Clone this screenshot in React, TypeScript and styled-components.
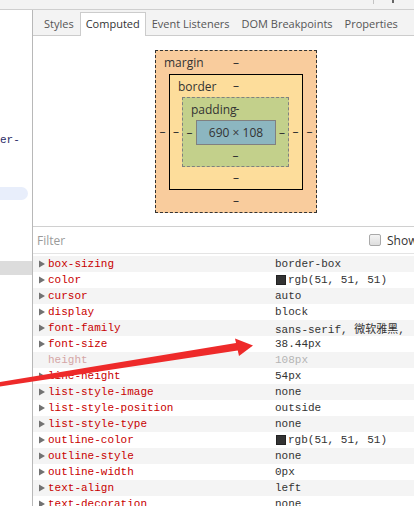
import styled, { createGlobalStyle } from 'styled-components';

const GlobalStyle = createGlobalStyle`
  html, body {
    margin: 0;
    padding: 0;
    background: #fff;
    overflow: hidden;
  }
`;

interface CssProp {
  name: string;
  value: string;
  swatch?: boolean;
  inactive?: boolean;
}

const props: CssProp[] = [
  { name: 'box-sizing', value: 'border-box' },
  { name: 'color', value: 'rgb(51, 51, 51)', swatch: true },
  { name: 'cursor', value: 'auto' },
  { name: 'display', value: 'block' },
  { name: 'font-family', value: 'sans-serif, 微软雅黑,' },
  { name: 'font-size', value: '38.44px' },
  { name: 'height', value: '108px', inactive: true },
  { name: 'line-height', value: '54px' },
  { name: 'list-style-image', value: 'none' },
  { name: 'list-style-position', value: 'outside' },
  { name: 'list-style-type', value: 'none' },
  { name: 'outline-color', value: 'rgb(51, 51, 51)', swatch: true },
  { name: 'outline-style', value: 'none' },
  { name: 'outline-width', value: '0px' },
  { name: 'text-align', value: 'left' },
  { name: 'text-decoration', value: 'none' },
];

const tabs = ['Styles', 'Computed', 'Event Listeners', 'DOM Breakpoints', 'Properties'];

const App = () => {
  return (
    <Frame>
      <GlobalStyle />
      <TopStrip>
        <StripMark />
        <StripDot />
      </TopStrip>
      <Main>
        <LeftPane>
          <CutText>er-</CutText>
          <Pill />
          <SelectedBand />
        </LeftPane>
        <RightPane>
          <TabBar>
            {tabs.map((t) => (
              <Tab key={t} $active={t === 'Computed'}>{t}</Tab>
            ))}
          </TabBar>
          <BoxArea>
            <Layer $bg="#f9cc9d" $border="1px dashed #333">
              <Label>margin</Label>
              <TopCell $h={23}>–</TopCell>
              <MidRow>
                <SideCell $w={13}>–</SideCell>
                <Layer $bg="#fddd9b" $border="1px solid #000">
                  <Label>border</Label>
                  <TopCell $h={22}>–</TopCell>
                  <MidRow>
                    <SideCell $w={12}>–</SideCell>
                    <Layer $bg="#c3d08b" $border="1px dashed #808080">
                      <Label>padding</Label>
                      <TopCell $h={22} $shift={4}>-</TopCell>
                      <MidRow>
                        <SideCell $w={13}>–</SideCell>
                        <Content>690 × 108</Content>
                        <SideCell $w={12}>–</SideCell>
                      </MidRow>
                      <TopCell $h={21}>–</TopCell>
                    </Layer>
                    <SideCell $w={13}>–</SideCell>
                  </MidRow>
                  <TopCell $h={22}>–</TopCell>
                </Layer>
                <SideCell $w={13}>–</SideCell>
              </MidRow>
              <TopCell $h={22}>–</TopCell>
            </Layer>
          </BoxArea>
          <FilterRow>
            <FilterText>Filter</FilterText>
            <ShowBox>
              <Check />
              <span>Show all</span>
            </ShowBox>
          </FilterRow>
          <PropList>
            {props.map((p, i) => (
              <PropRow key={p.name} $odd={i % 2 === 1}>
                <Caret $hidden={p.inactive}>
                  <svg width="6" height="8" viewBox="0 0 6 8">
                    <path d="M0 0.5 L6 4 L0 7.5 Z" fill="#727272" />
                  </svg>
                </Caret>
                <PropName $inactive={p.inactive}>{p.name}</PropName>
                <PropValue $inactive={p.inactive}>
                  {p.swatch && <Swatch />}
                  {p.value}
                </PropValue>
              </PropRow>
            ))}
          </PropList>
        </RightPane>
      </Main>
      <Arrow width="414" height="506" viewBox="0 0 414 506">
        <polygon points="0,382 0,386.5 241,350 239,342.5" fill="#ee2a2a" />
        <polygon points="235,338.5 253,345.5 239,356" fill="#ee2a2a" />
      </Arrow>
    </Frame>
  );
};

const Frame = styled.div`
  position: relative;
  width: 414px;
  height: 506px;
  overflow: hidden;
  font-family: 'Open Sans', 'Noto Sans', sans-serif;
  font-size: 12px;
  color: #333;
`;

const TopStrip = styled.div`
  height: 9px;
  background: #f3f3f3;
  border-bottom: 1px solid #cfcfcf;
  display: flex;
  justify-content: flex-end;
  align-items: flex-start;
  padding-right: 20px;
  gap: 18px;
`;

const StripMark = styled.div`
  width: 1px;
  height: 4px;
  background: #c4c4c4;
`;

const StripDot = styled.div`
  width: 2px;
  height: 3px;
  background: #666;
`;

const Main = styled.div`
  display: flex;
  height: 496px;
  overflow: hidden;
`;

const LeftPane = styled.div`
  width: 33px;
  flex-shrink: 0;
  box-sizing: border-box;
  border-right: 1px solid #b8b8b8;
  display: flex;
  flex-direction: column;
  padding-top: 123px;
`;

const CutText = styled.div`
  font-family: 'Liberation Mono', monospace;
  font-size: 11px;
  line-height: 14px;
  color: #2a2a66;
  white-space: nowrap;
  overflow: hidden;
`;

const Pill = styled.div`
  margin-top: 40px;
  width: 28px;
  height: 13px;
  border-radius: 0 7px 7px 0;
  background: #e8eefb;
`;

const SelectedBand = styled.div`
  margin-top: 61px;
  height: 14px;
  background: #dcdcdc;
`;

const RightPane = styled.div`
  flex: 1;
  display: flex;
  flex-direction: column;
  min-width: 0;
  overflow: hidden;

  & > * {
    flex-shrink: 0;
  }
`;

const TabBar = styled.div`
  height: 25px;
  background: #f3f3f3;
  border-bottom: 1px solid #cccccc;
  display: flex;
  align-items: flex-end;
  padding-left: 5px;
  white-space: nowrap;
`;

const Tab = styled.div<{ $active?: boolean }>`
  height: 24px;
  line-height: 21px;
  padding: 0 5px;
  box-sizing: border-box;
  font-size: 11px;
  color: ${(p) => (p.$active ? '#333' : '#555')};
  background: ${(p) => (p.$active ? '#fff' : 'transparent')};
  border: 1px solid ${(p) => (p.$active ? '#cccccc' : 'transparent')};
  border-bottom: none;
  margin-bottom: -1px;
`;

const BoxArea = styled.div`
  height: 191px;
  box-sizing: border-box;
  padding: 14px 0 0 122px;
  border-bottom: 1px solid #d0d0d0;
`;

const Layer = styled.div<{ $bg: string; $border: string }>`
  position: relative;
  display: inline-flex;
  flex-direction: column;
  background: ${(p) => p.$bg};
  border: ${(p) => p.$border};
`;

const Label = styled.span`
  position: absolute;
  left: 8px;
  top: 4px;
  line-height: 16px;
  color: #333;
`;

const TopCell = styled.div<{ $h: number; $shift?: number }>`
  height: ${(p) => p.$h}px;
  display: flex;
  align-items: center;
  justify-content: center;
  padding-left: ${(p) => p.$shift ?? 0}px;
  line-height: 12px;
`;

const MidRow = styled.div`
  display: flex;
  align-items: center;
`;

const SideCell = styled.div<{ $w: number }>`
  width: ${(p) => p.$w}px;
  text-align: center;
  line-height: 12px;
`;

const Content = styled.div`
  width: 80px;
  height: 25px;
  box-sizing: border-box;
  background: #8cb6c0;
  border: 1px solid #808080;
  display: flex;
  align-items: center;
  justify-content: center;
  color: #333;
`;

const FilterRow = styled.div`
  height: 26px;
  border-bottom: 1px solid #e4e4e4;
  display: flex;
  align-items: center;
  padding-left: 4px;
  white-space: nowrap;
`;

const FilterText = styled.span`
  width: 332px;
  flex-shrink: 0;
  color: #9a9a9a;
`;

const ShowBox = styled.div`
  display: flex;
  align-items: center;
  gap: 6px;
  flex-shrink: 0;
  color: #333;
`;

const Check = styled.div`
  width: 10px;
  height: 10px;
  border: 1px solid #a9a9a9;
  background: linear-gradient(#f4f4f4, #dedede);
  border-radius: 2px;
`;

const PropList = styled.div`
  display: flex;
  flex-direction: column;
  padding-top: 2px;
`;

const PropRow = styled.div<{ $odd: boolean }>`
  height: 16px;
  flex-shrink: 0;
  display: flex;
  align-items: center;
  padding-left: 6px;
  background: ${(p) => (p.$odd ? '#fff' : '#f4f4f4')};
  font-family: 'Liberation Mono', 'Noto Sans CJK SC', monospace;
  font-size: 11px;
  white-space: nowrap;
`;

const Caret = styled.span<{ $hidden?: boolean }>`
  width: 9px;
  display: flex;
  align-items: center;
  visibility: ${(p) => (p.$hidden ? 'hidden' : 'visible')};
`;

const PropName = styled.span<{ $inactive?: boolean }>`
  width: 227px;
  color: ${(p) => (p.$inactive ? '#d4a6a6' : '#c80000')};
`;

const PropValue = styled.span<{ $inactive?: boolean }>`
  display: flex;
  align-items: center;
  color: ${(p) => (p.$inactive ? '#b4b4b4' : '#333')};
`;

const Swatch = styled.span`
  width: 8px;
  height: 8px;
  background: #333;
  border: 1px solid #222;
  margin: 0 2px 0 1px;
`;

const Arrow = styled.svg`
  position: absolute;
  left: 0;
  top: 0;
  pointer-events: none;
`;

export default App;
